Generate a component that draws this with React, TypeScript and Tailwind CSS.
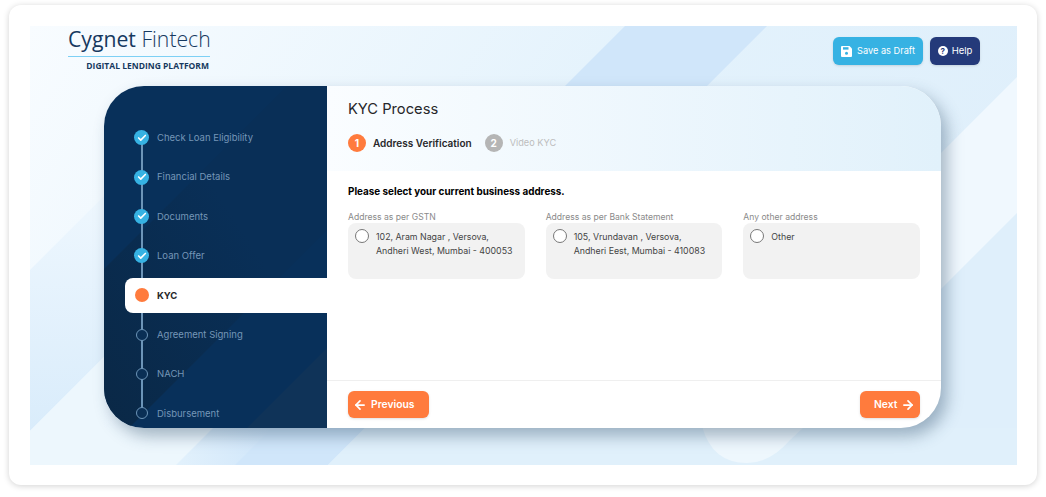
import React from 'react';
import { ArrowLeft, ArrowRight, Check } from 'lucide-react';

const FONT = "font-['Inter','Open_Sans',sans-serif]";

const STEPS = [
  { label: 'Check Loan Eligibility', state: 'done' },
  { label: 'Financial Details', state: 'done' },
  { label: 'Documents', state: 'done' },
  { label: 'Loan Offer', state: 'done' },
  { label: 'KYC', state: 'active' },
  { label: 'Agreement Signing', state: 'todo' },
  { label: 'NACH', state: 'todo' },
  { label: 'Disbursement', state: 'todo' },
];

const ADDRESSES = [
  { title: 'Address as per GSTN', lines: ['102, Aram Nagar , Versova,', 'Andheri West, Mumbai - 400053'] },
  { title: 'Address as per Bank Statement', lines: ['105, Vrundavan , Versova,', 'Andheri Eest, Mumbai - 410083'] },
  { title: 'Any other address', lines: ['Other'] },
];

const Backdrop: React.FC = () => (
  <svg className="absolute inset-0 h-full w-full" viewBox="0 0 987 439" preserveAspectRatio="none">
    <defs>
      <linearGradient id="page" x1="0" y1="0" x2="1" y2="0.3">
        <stop offset="0" stopColor="#f8fcff" />
        <stop offset="0.6" stopColor="#e3f2fc" />
        <stop offset="1" stopColor="#dfeffb" />
      </linearGradient>
      <linearGradient id="leftBand" x1="0" y1="0" x2="0" y2="1">
        <stop offset="0" stopColor="#eef7fe" />
        <stop offset="1" stopColor="#d9ecfb" />
      </linearGradient>
      <linearGradient id="bandFade" x1="0" y1="0" x2="1" y2="0">
        <stop offset="0" stopColor="#e2f1fc" />
        <stop offset="1" stopColor="#d0e6fa" />
      </linearGradient>
    </defs>
    <rect width="987" height="439" fill="url(#page)" />
    {/* left of the card */}
    <polygon points="0,244 74,170 74,331 0,405" fill="url(#leftBand)" />
    <polygon points="0,405 74,331 74,402 188,402 151,439 0,439" fill="#edf7fd" />
    {/* the strong band, top and bottom */}
    <polygon points="595,0 737,0 677,60 535,60" fill="#d0e6fa" />
    <polygon points="188,402 335,402 298,439 151,439" fill="#d0e6fa" />
    <polygon points="146,439 205,439 242,402 183,402" fill="url(#bandFade)" />
    <polygon points="298,439 335,402 987,402 987,439" fill="#e0f0fb" />
    {/* right of the card */}
    <polygon points="987,51 987,187 900,274 900,138" fill="#f0f8fe" />
    <path d="M672,400 Q682,437 717,437 Q740,437 760,414 L775,400 Z" fill="#eef7fd" />
  </svg>
);

const StepDot: React.FC<{ state: string }> = ({ state }) => {
  if (state === 'done') {
    return (
      <span className="flex h-[15px] w-[15px] items-center justify-center rounded-full bg-[#36b2e3]">
        <Check size={10} strokeWidth={4} className="text-white" />
      </span>
    );
  }
  if (state === 'active') return <span className="h-[14px] w-[14px] rounded-full bg-[#ff7b3d]" />;
  return <span className="h-[12px] w-[12px] rounded-full border-[1.5px] border-[#6d95b8] bg-[#0a2f55]" />;
};

const Sidebar: React.FC = () => (
  <aside className="relative w-[223px] shrink-0 overflow-hidden bg-[#08305a] pt-[32px]">
    <svg className="absolute inset-0 h-full w-full" viewBox="0 0 223 342" preserveAspectRatio="none">
      <defs>
        <linearGradient id="wedge" x1="0" y1="1" x2="1" y2="0">
          <stop offset="0" stopColor="#0a2846" />
          <stop offset="0.6" stopColor="#092f57" />
        </linearGradient>
      </defs>
      <polygon points="0,183 183,0 223,0 223,144 25,342 0,342" fill="url(#wedge)" />
      <polygon points="223,262 223,342 143,342" fill="#0f3358" />
    </svg>
    <div className="absolute bottom-[15px] left-[37px] top-[51px] w-[1.5px] bg-[#6d95b8]" />
    <ul className="relative">
      {STEPS.map((step) => (
        <li
          key={step.label}
          className={
            step.state === 'active'
              ? 'my-[2.2px] ml-[21px] flex h-[35px] items-center gap-[8px] rounded-l-lg bg-white pl-[9px]'
              : 'ml-[21px] flex h-[39.4px] items-center pl-[9px]'
          }
        >
          <span className="flex w-[15px] shrink-0 items-center justify-center">
            <StepDot state={step.state} />
          </span>
          <span
            className={
              step.state === 'active'
                ? 'pt-[1px] text-[9.5px] font-bold text-[#27272a]'
                : 'ml-[8px] pt-[1px] text-[9.5px] text-[#7596b7]'
            }
          >
            {step.label}
          </span>
        </li>
      ))}
    </ul>
  </aside>
);

const AddressCard: React.FC<{ title: string; lines: string[] }> = ({ title, lines }) => (
  <div>
    <div className="text-[8.6px] leading-[12px] text-[#8a8a8a]">{title}</div>
    <label className="flex h-[56px] gap-[7px] rounded-lg bg-[#f2f2f2] pl-[7px] pt-[6px]">
      <span className="h-[14px] w-[14px] shrink-0 rounded-full border-[1.5px] border-[#777] bg-white" />
      <span className="pt-[1px] text-[8.8px] leading-[14px] text-[#444]">
        {lines.map((line) => (
          <div key={line}>{line}</div>
        ))}
      </span>
    </label>
  </div>
);

const App: React.FC = () => {
  return (
    <div className={`${FONT} h-[497px] w-[1046px] overflow-hidden bg-white pl-[9px] pt-[5px]`}>
      <div className="h-[480px] w-[1028px] rounded-xl bg-white p-[21px] shadow-[0_1px_6px_rgba(0,0,0,0.18)]">
        <div className="relative h-[439px] w-[987px]">
          <Backdrop />
          <div className="relative">
            <header className="flex h-[60px] justify-between pl-[38px] pr-[37px]">
              <div className="w-[150px] font-['Open_Sans',sans-serif] text-[#16395f]">
                <div className="text-[21.2px] leading-[26px]">
                  <span className="font-medium">Cygnet</span>{' '}
                  <span className="font-light">Fintech</span>
                </div>
                <div className="mt-[4px] h-px w-[142px] bg-[#7dd0f5]" />
                <div className="mt-[3px] w-[142px] pr-[1px] text-right text-[8.5px] font-bold leading-[12px]">DIGITAL LENDING PLATFORM</div>
              </div>
              <div className="mt-[11px] flex h-[28px] gap-[7px] text-white">
                <button className="flex w-[90px] items-center justify-center gap-[5px] rounded-md bg-[#36b2e3] text-[9.2px] shadow-sm">
                  <svg width="11" height="11" viewBox="0 0 11 11">
                    <path d="M1 0h7.5L11 2.500V10a1 1 0 0 1-1 1H1a1 1 0 0 1-1-1V1a1 1 0 0 1 1-1z" fill="#fff" />
                    <rect x="2" y="1.200" width="5.500" height="2.400" fill="#36b2e3" />
                    <circle cx="5.500" cy="7.300" r="1.500" fill="#36b2e3" />
                  </svg>
                  Save as Draft
                </button>
                <button className="flex w-[50px] items-center justify-center gap-[4px] rounded-md bg-[#243a7a] text-[9.5px] shadow-sm">
                  <span className="flex h-[10px] w-[10px] items-center justify-center rounded-full bg-white text-[8px] font-bold text-[#243a7a]">?</span>
                  Help
                </button>
              </div>
            </header>
            <main className="mx-[74px] flex h-[342px] w-[837px] overflow-hidden rounded-[40px] bg-white shadow-[6px_8px_16px_rgba(40,70,100,0.38)]">
              <Sidebar />
              <section className="flex min-w-0 flex-1 flex-col">
                <div className="h-[85px] bg-gradient-to-r from-[#fafdff] to-[#e1f1fb] pl-[21px] pt-[14px]">
                  <h1 className="text-[14.7px] leading-[18px] text-[#27272a]">KYC Process</h1>
                  <div className="mt-[16px] flex items-center text-[10px]">
                    <span className="flex h-[18px] w-[18px] items-center justify-center rounded-full bg-[#ff7b3d] text-[10px] font-bold text-white">1</span>
                    <span className="ml-[7px] font-semibold text-[#27272a]">Address Verification</span>
                    <span className="ml-[13px] flex h-[18px] w-[18px] items-center justify-center rounded-full bg-[#b5b5b5] text-[10px] font-bold text-white">2</span>
                    <span className="ml-[7px] text-[9.2px] text-[#bdbdbd]">Video KYC</span>
                  </div>
                </div>
                <div className="flex-1 px-[21px] pt-[14px]">
                  <p className="text-[9.9px] font-bold leading-[12px] text-black">Please select your current business address.</p>
                  <div className="mt-[14px] grid grid-cols-3 gap-[21px]">
                    {ADDRESSES.map((address) => (
                      <AddressCard key={address.title} title={address.title} lines={address.lines} />
                    ))}
                  </div>
                </div>
                <footer className="flex h-[48px] items-start justify-between border-t border-[#efefef] px-[21px] pt-[10px] text-[10.3px] font-semibold text-white">
                  <button className="flex h-[27px] w-[81px] items-center gap-[4px] rounded-md bg-[#ff7b3d] pl-[5px] shadow-sm">
                    <ArrowLeft size={14} strokeWidth={3} />
                    Previous
                  </button>
                  <button className="flex h-[27px] w-[60px] items-center gap-[4px] rounded-md bg-[#ff7b3d] pl-[14px] shadow-sm">
                    Next
                    <ArrowRight size={14} strokeWidth={3} />
                  </button>
                </footer>
              </section>
            </main>
          </div>
        </div>
      </div>
    </div>
  );
};

export default App;
